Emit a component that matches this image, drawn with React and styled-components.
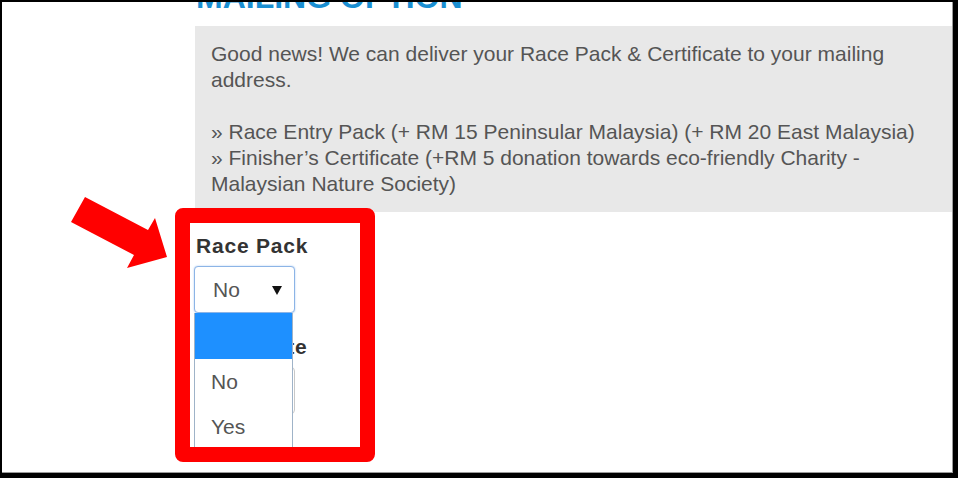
import styled, { createGlobalStyle } from 'styled-components';

const GlobalStyle = createGlobalStyle`
  html, body {
    margin: 0;
    padding: 0;
    background: #fff;
  }
  body {
    font-family: "Liberation Sans", Arial, sans-serif;
  }
`;

const Frame = styled.div`
  position: relative;
  width: 958px;
  height: 478px;
  box-sizing: border-box;
  border-style: solid;
  border-color: #000;
  border-width: 2px 5px 5px 2px;
  box-shadow: inset -1px -1px 0 #9a9a9a;
  overflow: hidden;
  background: #fff;
`;

const Content = styled.div`
  padding-left: 193px;
  padding-right: 1px;
`;

const Heading = styled.h2`
  margin: -21px 0 0 1px;
  font-size: 32px;
  line-height: 32px;
  font-weight: bold;
  color: #1a8fd2;
  text-transform: uppercase;
  white-space: nowrap;
`;

const InfoBox = styled.div`
  margin-top: 13px;
  background: #e8e8e8;
  padding: 15px 16px;
  color: #555;
  font-size: 21px;
  line-height: 26px;
`;

const Para = styled.p`
  margin: 0 0 26px;
  &:last-child {
    margin-bottom: 0;
  }
`;

const Form = styled.div`
  padding-top: 22px;
`;

const Field = styled.div`
  position: relative;
  margin-bottom: 22px;
`;

const Label = styled.div`
  padding-left: 1px;
  font-size: 21px;
  line-height: 24px;
  font-weight: bold;
  letter-spacing: 0.8px;
  color: #333;
  margin-bottom: 8px;
`;

const SelectWrap = styled.div`
  position: relative;
  width: 101px;
  margin-left: -1px;
`;

const Select = styled.div`
  display: flex;
  align-items: center;
  justify-content: space-between;
  box-sizing: border-box;
  height: 47px;
  padding: 0 12px 0 18px;
  border: 1px solid ${({ $focused }) => ($focused ? '#8cb4e6' : '#c8c8c8')};
  border-radius: 4px;
  box-shadow: ${({ $focused }) => ($focused ? '0 0 2px #a8c8f0' : 'none')};
  background: #fff;
  color: #555;
  font-size: 21px;
`;

const Caret = styled.span`
  width: 0;
  height: 0;
  margin-top: 2px;
  margin-left: auto;
  border-left: 5px solid transparent;
  border-right: 5px solid transparent;
  border-top: 9px solid #111;
`;

const OptionList = styled.div`
  position: absolute;
  top: 100%;
  left: 0;
  z-index: 2;
  width: 99px;
  box-sizing: border-box;
  border-left: 1px solid #9fb3c8;
  border-right: 1px solid #9fb3c8;
  background: #fff;
`;

const Option = styled.div`
  height: ${({ $active }) => ($active ? '46px' : '45px')};
  display: flex;
  align-items: center;
  padding-left: 16px;
  background: ${({ $active }) => ($active ? '#1e90ff' : '#fff')};
  color: ${({ $active }) => ($active ? '#fff' : '#555')};
  font-size: 21px;
`;

const Highlight = styled.div`
  position: absolute;
  left: 173px;
  top: 206px;
  z-index: 5;
  width: 200px;
  height: 254px;
  box-sizing: border-box;
  border: 15px solid #ff0000;
  border-radius: 8px;
`;

const Arrow = styled.svg`
  position: absolute;
  left: 66px;
  top: 193px;
  z-index: 5;
`;

export default function App() {
  return (
    <>
      <GlobalStyle />
      <Frame>
        <Content>
          <Heading>Mailing Option</Heading>
          <InfoBox>
            <Para>
              Good news! We can deliver your Race Pack &amp; Certificate to your mailing address.
            </Para>
            <Para>
              » Race Entry Pack (+ RM 15 Peninsular Malaysia) (+ RM 20 East Malaysia)
              <br />
              » Finisher’s Certificate (+RM 5 donation towards eco-friendly Charity - Malaysian
              Nature Society)
            </Para>
          </InfoBox>
          <Form>
            <Field>
              <Label>Race Pack</Label>
              <SelectWrap>
                <Select $focused>
                  No
                  <Caret />
                </Select>
                <OptionList>
                  <Option $active />
                  <Option>No</Option>
                  <Option>Yes</Option>
                </OptionList>
              </SelectWrap>
            </Field>
            <Field>
              <Label>Certificate</Label>
              <SelectWrap>
                <Select>
                  <Caret />
                </Select>
              </SelectWrap>
            </Field>
          </Form>
        </Content>
        <Highlight />
        <Arrow width="110" height="80" viewBox="0 0 110 80">
          <polygon
            points="17,2 80,35 87,23 99,62 59,73 66,60 3,27"
            fill="#ff0000"
          />
        </Arrow>
      </Frame>
    </>
  );
}
